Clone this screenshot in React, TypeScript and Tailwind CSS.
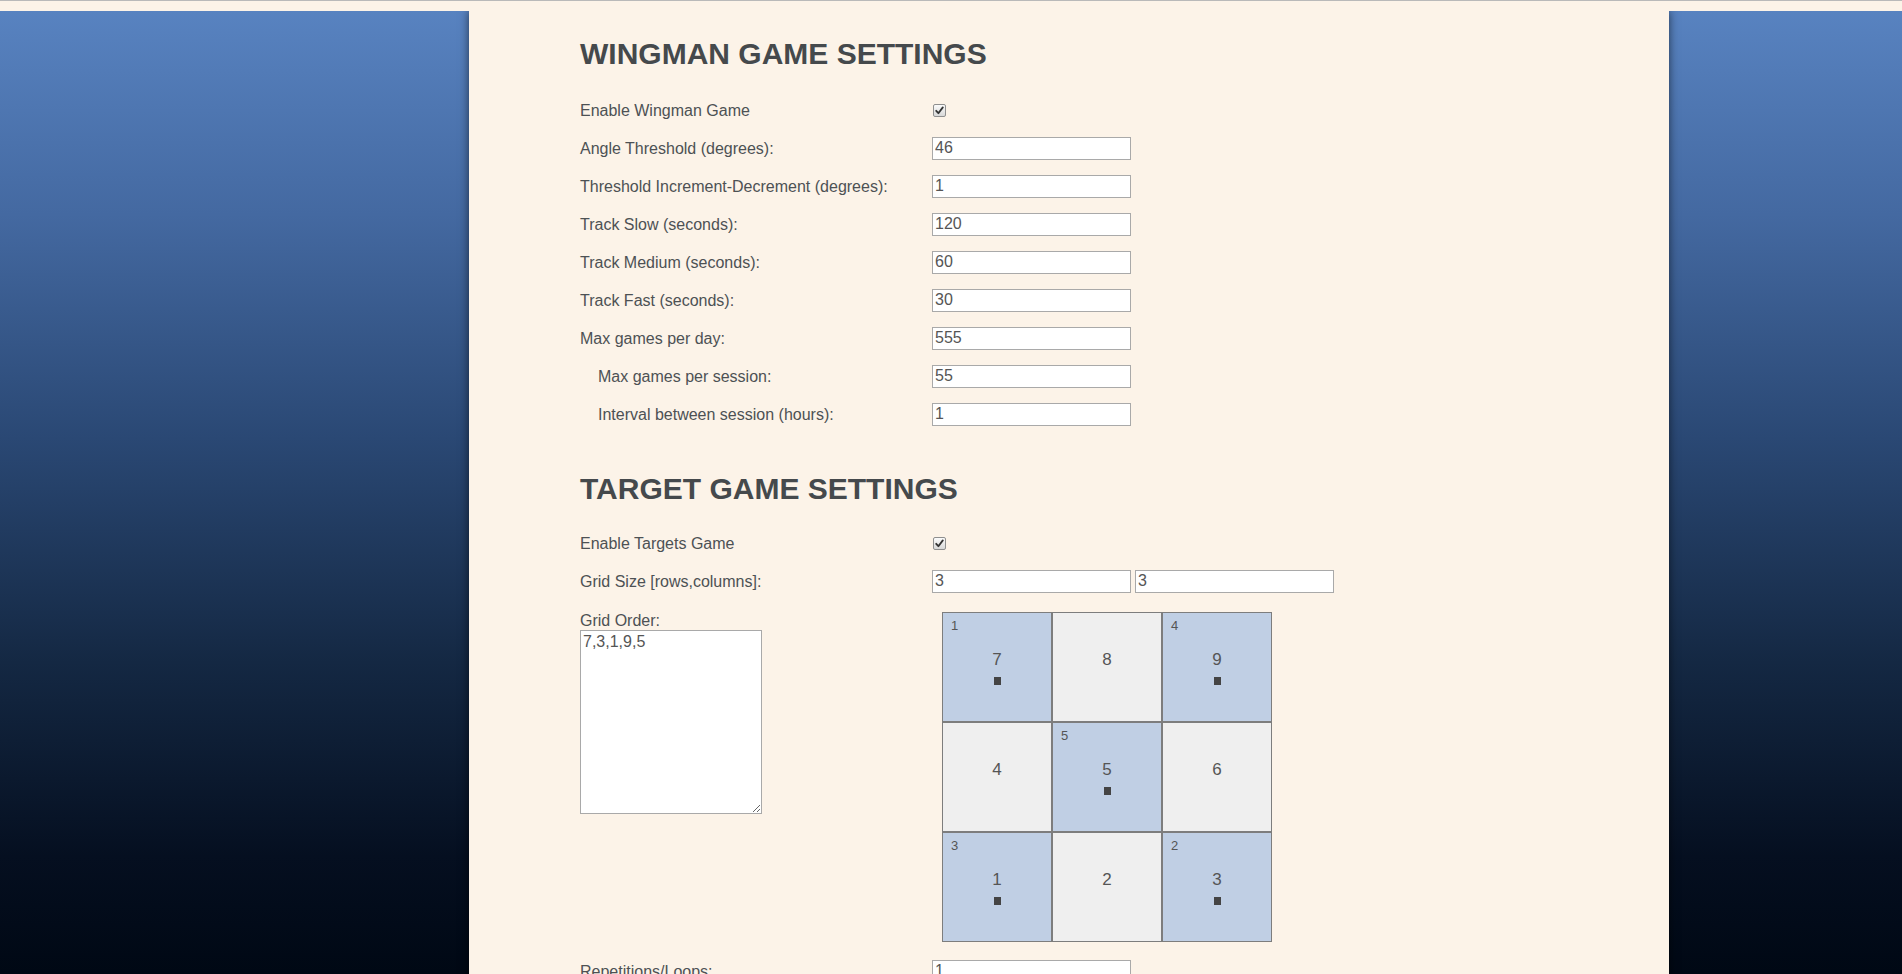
import React from "react";

const cream = "bg-[#fcf3e8]";

function Check() {
  return (
    <span className="inline-flex h-[13px] w-[13px] items-center justify-center rounded-[2px] border border-[#8f8f8f] bg-[linear-gradient(to_bottom,#fbfbfb,#d8d8d8)]">
      <svg width="9" height="9" viewBox="0 0 9 9">
        <path d="M1.2 4.8 L3.4 7.2 L7.8 1.4" fill="none" stroke="#333" strokeWidth="1.8" strokeLinecap="round" strokeLinejoin="round" />
      </svg>
    </span>
  );
}

function TextInput({ value, className = "" }: { value: string; className?: string }) {
  return (
    <input
      type="text"
      defaultValue={value}
      className={
        "h-[23px] w-[199px] border border-[#a9a9a9] bg-white px-[2px] text-[16px] leading-[21px] text-[#555] outline-none " +
        className
      }
    />
  );
}

function Row({
  label,
  indent,
  children,
}: {
  label: string;
  indent?: boolean;
  children: React.ReactNode;
}) {
  return (
    <div className="flex h-[38px] items-center">
      <div className={"mt-[2px] w-[352px] shrink-0 text-[16px] text-[#4d5154] " + (indent ? "pl-[18px]" : "")}>
        {label}
      </div>
      <div className="flex items-center gap-[4px]">{children}</div>
    </div>
  );
}

type Cell = { n: number; order?: number };

function GridCell({ c }: { c: Cell }) {
  const active = c.order !== undefined;
  return (
    <div
      className={
        "relative h-[110px] w-[110px] border border-[#7d7d7d] " +
        (active ? "bg-[#c0cfe4]" : "bg-[#efefef]")
      }
    >
      {active && (
        <span className="absolute left-[8px] top-[5px] text-[13px] leading-[15px] text-[#555]">{c.order}</span>
      )}
      <div className="flex flex-col items-center pt-[37px]">
        <span className="text-[17px] leading-[20px] text-[#555]">{c.n}</span>
        {active && <span className="mt-[7px] h-[8px] w-[7px] bg-[#444]" />}
      </div>
    </div>
  );
}

export default function App() {
  const cells: Cell[] = [
    { n: 7, order: 1 },
    { n: 8 },
    { n: 9, order: 4 },
    { n: 4 },
    { n: 5, order: 5 },
    { n: 6 },
    { n: 1, order: 3 },
    { n: 2 },
    { n: 3, order: 2 },
  ];

  return (
    <div className="min-h-screen bg-[linear-gradient(to_bottom,#5984c2_0%,#4469a1_22%,#2a4874_45%,#142843_68%,#050f20_88%,#000814_100%)] bg-fixed font-['Liberation_Sans',Arial,sans-serif]">
      <div className={"relative z-10 h-[11px] border-t border-[#b9b9b9] " + cream} />
      <div className="flex">
        <div className="w-[469px] shrink-0" />
        <main
          className={
            "w-[1200px] shrink-0 pl-[111px] pt-[26px] pb-[60px] shadow-[0_0_9px_rgba(0,0,0,0.6)] " + cream
          }
        >
          <h2 className="mb-[20px] text-[30px] font-bold leading-[34px] text-[#45494c]">WINGMAN GAME SETTINGS</h2>
          <Row label="Enable Wingman Game">
            <span className="pl-px">
              <Check />
            </span>
          </Row>
          <Row label="Angle Threshold (degrees):">
            <TextInput value="46" />
          </Row>
          <Row label="Threshold Increment-Decrement (degrees):">
            <TextInput value="1" />
          </Row>
          <Row label="Track Slow (seconds):">
            <TextInput value="120" />
          </Row>
          <Row label="Track Medium (seconds):">
            <TextInput value="60" />
          </Row>
          <Row label="Track Fast (seconds):">
            <TextInput value="30" />
          </Row>
          <Row label="Max games per day:">
            <TextInput value="555" />
          </Row>
          <Row label="Max games per session:" indent>
            <TextInput value="55" />
          </Row>
          <Row label="Interval between session (hours):" indent>
            <TextInput value="1" />
          </Row>

          <h2 className="mb-[18px] mt-[39px] text-[30px] font-bold leading-[34px] text-[#45494c]">TARGET GAME SETTINGS</h2>
          <Row label="Enable Targets Game">
            <span className="pl-px">
              <Check />
            </span>
          </Row>
          <Row label="Grid Size [rows,columns]:">
            <TextInput value="3" />
            <TextInput value="3" />
          </Row>

          <div className="mt-[12px] flex">
            <div className="w-[352px] shrink-0">
              <div className="text-[16px] leading-[18px] text-[#4d5154]">Grid Order:</div>
              <textarea
                defaultValue="7,3,1,9,5"
                className="h-[184px] w-[182px] border border-[#a9a9a9] bg-white px-[2px] py-[1px] text-[16px] leading-[19px] text-[#555] outline-none"
              />
            </div>
            <div className="ml-[10px] grid w-[330px] grid-cols-3">
              {cells.map((c, i) => (
                <GridCell key={i} c={c} />
              ))}
            </div>
          </div>

          <div className="mt-[10px]">
            <Row label="Repetitions/Loops:">
              <TextInput value="1" />
            </Row>
          </div>
        </main>
      </div>
    </div>
  );
}
